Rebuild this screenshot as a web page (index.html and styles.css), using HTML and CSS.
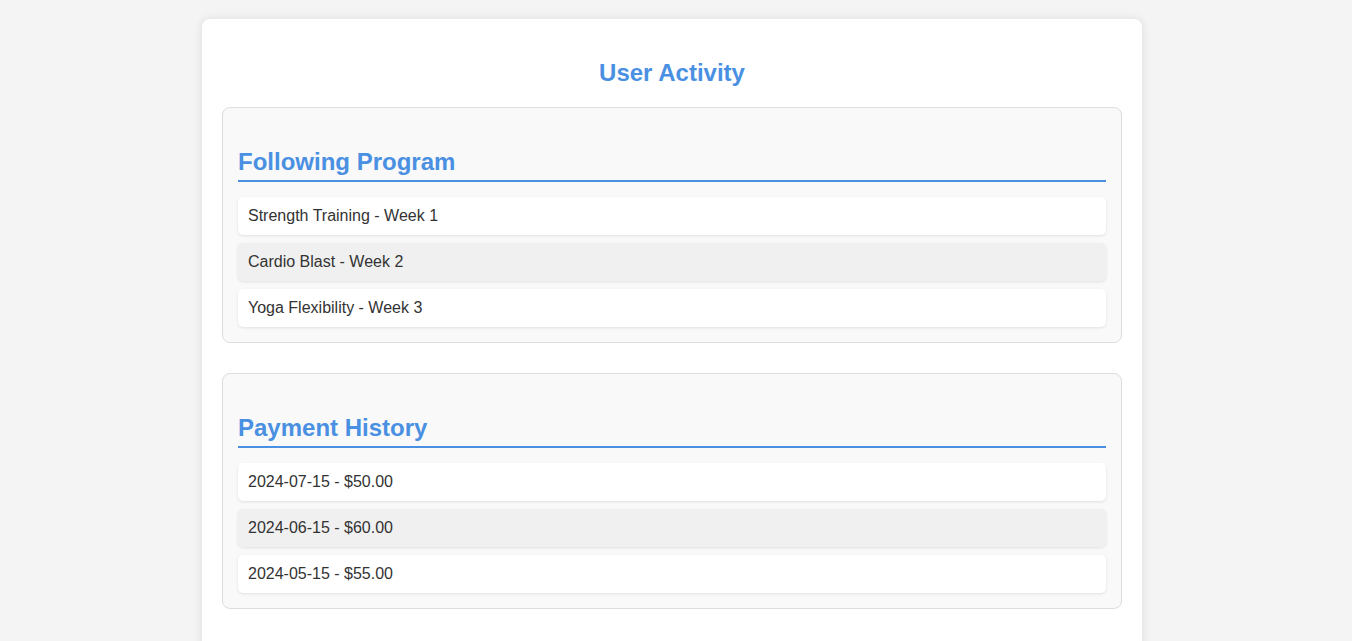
FILE: index.html
```html
<!DOCTYPE html>
<html lang="en">
<head>
<meta charset="UTF-8">
<title>User Activity</title>
<link rel="stylesheet" href="styles.css">
</head>
<body>
<div class="container">
  <h1 class="title">User Activity</h1>
  <section class="panel">
    <h2 class="panel-title">Following Program</h2>
    <ul class="list">
      <li class="item">Strength Training - Week 1</li>
      <li class="item">Cardio Blast - Week 2</li>
      <li class="item">Yoga Flexibility - Week 3</li>
    </ul>
  </section>
  <section class="panel">
    <h2 class="panel-title">Payment History</h2>
    <ul class="list">
      <li class="item">2024-07-15 - $50.00</li>
      <li class="item">2024-06-15 - $60.00</li>
      <li class="item">2024-05-15 - $55.00</li>
    </ul>
  </section>
</div>
</body>
</html>
```
FILE: styles.css
```css
body {
  margin: 0;
  padding: 19px 28px 20px 20px;
  background: #f4f4f4;
  font-family: "Liberation Sans", Arial, sans-serif;
  color: #333;
}
.container {
  max-width: 900px;
  margin: 0 auto;
  background: #fff;
  padding: 20px;
  border-radius: 8px;
  box-shadow: 0 0 10px rgba(0, 0, 0, 0.1);
}
.title {
  font-size: 24px;
  font-weight: bold;
  color: #4a90e2;
  text-align: center;
  margin: 20px 0;
}
.panel {
  background: #f9f9f9;
  border: 1px solid #ddd;
  border-radius: 8px;
  padding: 20px 15px 15px;
  margin-bottom: 30px;
}
.panel-title {
  font-size: 24px;
  color: #4a90e2;
  margin: 20px 0 15px;
  padding-bottom: 4px;
  border-bottom: 2px solid #4a90e2;
}
.list {
  list-style: none;
  margin: 0;
  padding: 0;
  display: flex;
  flex-direction: column;
  gap: 8px;
}
.item {
  background: #fff;
  padding: 10px;
  border-radius: 5px;
  font-size: 16px;
  box-shadow: 0 1px 3px rgba(0, 0, 0, 0.1);
}
.item:nth-child(even) {
  background: #f0f0f0;
}
```
